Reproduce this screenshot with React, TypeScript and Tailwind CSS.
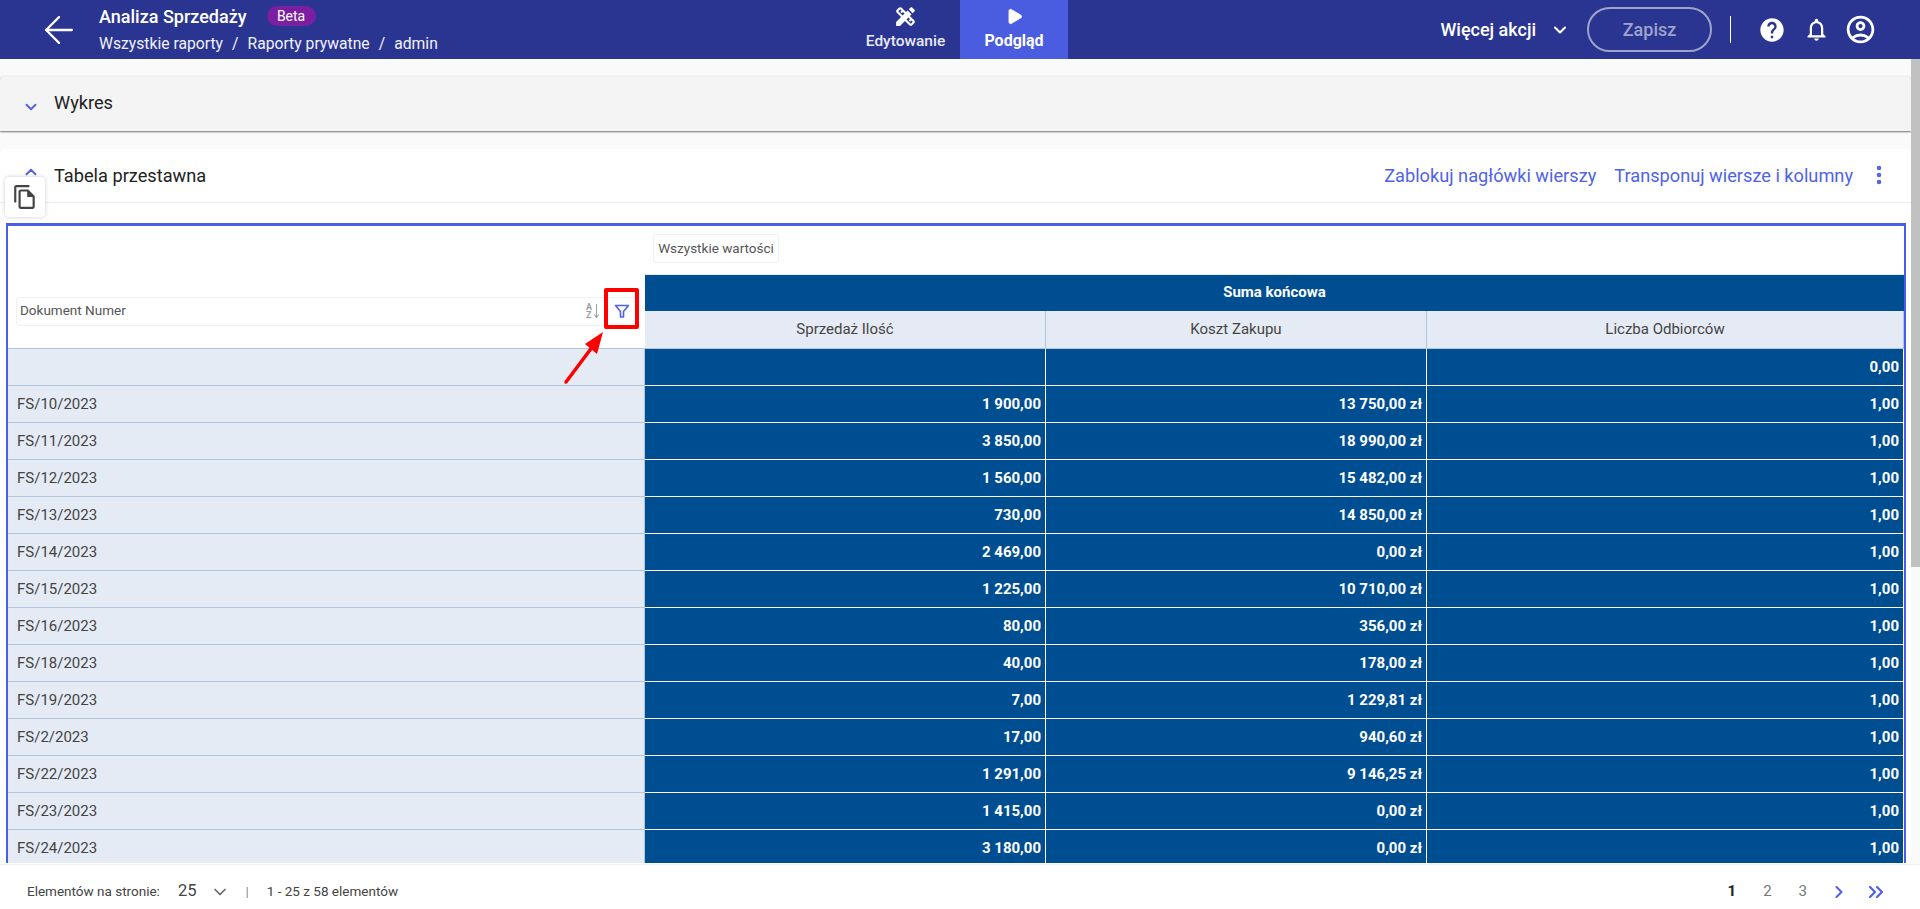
import { ArrowLeft, ChevronDown, ChevronRight, ChevronUp, ChevronsRight, EllipsisVertical, Play } from "lucide-react";
import { MdDesignServices, MdHelp, MdOutlineAccountCircle, MdOutlineFileCopy, MdOutlineNotifications } from "react-icons/md";

const rows = [
  ["", "", "", "0,00"],
  ["FS/10/2023", "1 900,00", "13 750,00 zł", "1,00"],
  ["FS/11/2023", "3 850,00", "18 990,00 zł", "1,00"],
  ["FS/12/2023", "1 560,00", "15 482,00 zł", "1,00"],
  ["FS/13/2023", "730,00", "14 850,00 zł", "1,00"],
  ["FS/14/2023", "2 469,00", "0,00 zł", "1,00"],
  ["FS/15/2023", "1 225,00", "10 710,00 zł", "1,00"],
  ["FS/16/2023", "80,00", "356,00 zł", "1,00"],
  ["FS/18/2023", "40,00", "178,00 zł", "1,00"],
  ["FS/19/2023", "7,00", "1 229,81 zł", "1,00"],
  ["FS/2/2023", "17,00", "940,60 zł", "1,00"],
  ["FS/22/2023", "1 291,00", "9 146,25 zł", "1,00"],
  ["FS/23/2023", "1 415,00", "0,00 zł", "1,00"],
  ["FS/24/2023", "3 180,00", "0,00 zł", "1,00"],
];

const columns = ["Sprzedaż Ilość", "Koszt Zakupu", "Liczba Odbiorców"];

function TopBar() {
  return (
    <header className="flex h-[59px] shrink-0 items-stretch bg-[#2a3592] text-white">
      <div className="flex w-[640px] items-center">
        <ArrowLeft className="ml-[37px] h-[44px] w-[44px]" strokeWidth={1.25} />
        <div className="ml-[18px] flex flex-col">
          <div className="flex h-[24px] items-center">
            <span className="text-[18px] font-medium">Analiza Sprzedaży</span>
            <span className="ml-[20px] flex h-[20px] w-[49px] items-center justify-center rounded-full bg-[#7b1fa2] text-[14px]">Beta</span>
          </div>
          <div className="mt-[5px] flex h-[22px] items-center text-[15.7px] text-[#f1f2fa]">
            <span>Wszystkie raporty</span>
            <span className="mx-[9px]">/</span>
            <span>Raporty prywatne</span>
            <span className="mx-[9px]">/</span>
            <span>admin</span>
          </div>
        </div>
      </div>
      <div className="ml-[211px] flex w-[109px] flex-col items-center">
        <MdDesignServices className="mt-[4px] h-[25px] w-[25px]" />
        <span className="mt-[1px] text-[15.5px] font-medium text-[#e8e9f5]">Edytowanie</span>
      </div>
      <div className="flex w-[108px] flex-col items-center bg-[#4a5ce0]">
        <Play className="mt-[7px] h-[19px] w-[19px] fill-white" strokeWidth={1} />
        <span className="mt-[3px] text-[16px] font-bold">Podgląd</span>
      </div>
      <div className="ml-auto flex items-center pr-[43px]">
        <span className="text-[18px] font-medium">Więcej akcji</span>
        <ChevronDown className="ml-[14px] h-5 w-5" strokeWidth={2.5} />
        <button className="ml-[17px] flex h-[45px] w-[125px] items-center justify-center rounded-full border-2 border-[#9ea3cb] text-[18px] font-medium text-[#9ea3cb]">
          Zapisz
        </button>
        <div className="ml-[18px] h-[27px] w-px bg-white" />
        <MdHelp className="ml-[27px] h-[28px] w-[28px]" />
        <MdOutlineNotifications className="ml-[17px] h-[27px] w-[27px]" />
        <MdOutlineAccountCircle className="ml-[14px] h-[33px] w-[33px]" />
      </div>
    </header>
  );
}

function PivotTable() {
  return (
    <div className="relative mx-[6px] mt-[20px] h-[640px] w-[1900px] overflow-hidden border-x-2 border-t-[3px] border-[#4a5de8]">
      <div className="grid grid-cols-[637px_401px_381px_477px]">
        <div className="relative row-span-3 flex h-[123px] items-start border-b border-[#afc6dc] bg-white">
          <div className="ml-[8px] mt-[71px] flex h-[29px] w-[622px] items-center rounded-[3px] border border-[#f0f0f0] pb-[2px] pl-[3px] text-[13.5px] text-[#555]">
            Dokument Numer
            <div className="ml-auto mr-[37px] flex items-center text-[#a0a0a0]">
              <span className="flex flex-col text-[9px] font-bold leading-[8px]">
                <span>A</span>
                <span>Z</span>
              </span>
              <svg viewBox="0 0 8 18" className="ml-[1px] h-[18px] w-[7px]" fill="none" stroke="currentColor" strokeWidth="1.2">
                <path d="M4 1v15M1.5 13L4 16.5 6.5 13" />
              </svg>
            </div>
          </div>
          <svg viewBox="0 0 16 16" className="absolute left-[606px] top-[77px] h-[16px] w-[16px]" fill="none" stroke="#4f63e7" strokeWidth="1.6">
            <path d="M1.5 2.5h13L9.5 8.5v5.5h-3V8.5z" strokeLinejoin="round" />
          </svg>
        </div>
        <div className="col-span-3 flex h-[48px] items-start bg-white pl-[8px] pt-[8px]">
          <div className="flex h-[29px] w-[126px] items-center justify-center rounded-[3px] border border-[#f0f0f0] text-[13.5px] text-[#555]">
            Wszystkie wartości
          </div>
        </div>
        <div className="col-span-3 flex h-[37px] items-center justify-center border-t border-[#e8e8e8] bg-[#004e92] pb-[2px] text-[15px] font-bold text-white">
          Suma końcowa
        </div>
        {columns.map((c) => (
          <div key={c} className="flex h-[38px] items-center justify-center border-r border-b border-[#afc6dc] bg-[#e4ebf4] text-[15px] text-[#444]">
            {c}
          </div>
        ))}
        {rows.map((r, i) => (
          <div key={i} className="contents">
            <div className="flex h-[37px] items-center border-b border-r border-[#afc6dc] bg-[#e4ebf4] pl-[9px] text-[15px] text-[#444]">
              {r[0]}
            </div>
            {r.slice(1).map((v, j) => (
              <div key={j} className="flex h-[37px] items-center justify-end border-b border-r border-white bg-[#004e92] pr-[4px] text-[15px] font-bold text-white">
                {v}
              </div>
            ))}
          </div>
        ))}
      </div>
      <div className="absolute left-[596px] top-[62px] h-[41px] w-[35px] rounded-[2px] border-[4px] border-[#ff0000]" />
      <svg className="absolute left-[550px] top-[104px] h-[55px] w-[55px]" viewBox="0 0 55 55" fill="none">
        <path d="M8 52L38 12" stroke="#ff0000" strokeWidth="3.5" strokeLinecap="round" />
        <path d="M45 2L27 14 39 24z" fill="#ff0000" />
      </svg>
    </div>
  );
}

export default function App() {
  return (
    <div className="relative flex h-[909px] w-full flex-col overflow-hidden bg-[#fafafa] font-['Roboto',sans-serif]">
      <TopBar />
      <div className="flex min-h-0 flex-1">
        <main className="w-[1911px] pt-[17px]">
          <div className="flex h-[55px] items-center rounded-t-[4px] border-t border-[#f0f0f0] bg-[#f4f4f4] shadow-[0_1px_2px_rgba(0,0,0,0.55)]">
            <ChevronDown className="ml-[22px] mt-[6px] h-[18px] w-[18px] text-[#4f63e7]" strokeWidth={2.5} />
            <span className="ml-[14px] pb-[2px] text-[18.2px] text-[#222]">Wykres</span>
          </div>
          <section className="relative mt-[18px] h-[715px] rounded-t-[6px] bg-white">
            <div className="flex h-[54px] items-center border-b border-[#eeeeee]">
              <ChevronUp className="ml-[22px] -mt-[8px] h-[18px] w-[18px] text-[#4f63e7]" strokeWidth={2.5} />
              <span className="ml-[14px] text-[18.2px] text-[#222]">Tabela przestawna</span>
              <div className="ml-auto flex items-center pr-[20px] text-[18.2px] text-[#4f63e7]">
                <span>Zablokuj nagłówki wierszy</span>
                <span className="ml-[18px]">Transponuj wiersze i kolumny</span>
                <EllipsisVertical className="ml-[14px] h-6 w-6" strokeWidth={2.5} />
              </div>
            </div>
            <PivotTable />
            <div className="absolute left-[5px] top-[28px] flex h-[40px] w-[40px] items-center justify-center rounded-[4px] bg-white shadow-[0_0_4px_rgba(0,0,0,0.2)]">
              <MdOutlineFileCopy className="h-[26px] w-[26px] text-[#444]" />
            </div>
          </section>
        </main>
        <div className="w-[9px]">
          <div className="h-[508px] bg-[#c1c1c1]" />
        </div>
      </div>
      <footer className="absolute bottom-0 left-0 flex h-[45px] w-full items-center border-t border-[#f0f0f0] bg-white pl-[27px] pr-[32px] pt-[9px] text-[13.5px] text-[#444]">
        <span>Elementów na stronie:</span>
        <span className="ml-[18px] text-[16.5px]">25</span>
        <ChevronDown className="ml-[14px] h-5 w-5 text-[#666]" strokeWidth={2} />
        <span className="ml-[15px] text-[#888]">|</span>
        <span className="ml-[18px]">1 - 25 z 58 elementów</span>
        <div className="ml-auto flex items-center text-[15px] text-[#777]">
          <span className="font-bold text-[#222]">1</span>
          <span className="ml-[27px]">2</span>
          <span className="ml-[27px]">3</span>
          <ChevronRight className="ml-[22px] h-5 w-5 text-[#4f63e7]" strokeWidth={2.5} />
          <ChevronsRight className="ml-[15px] h-6 w-6 text-[#4f63e7]" strokeWidth={2.25} />
        </div>
      </footer>
    </div>
  );
}
